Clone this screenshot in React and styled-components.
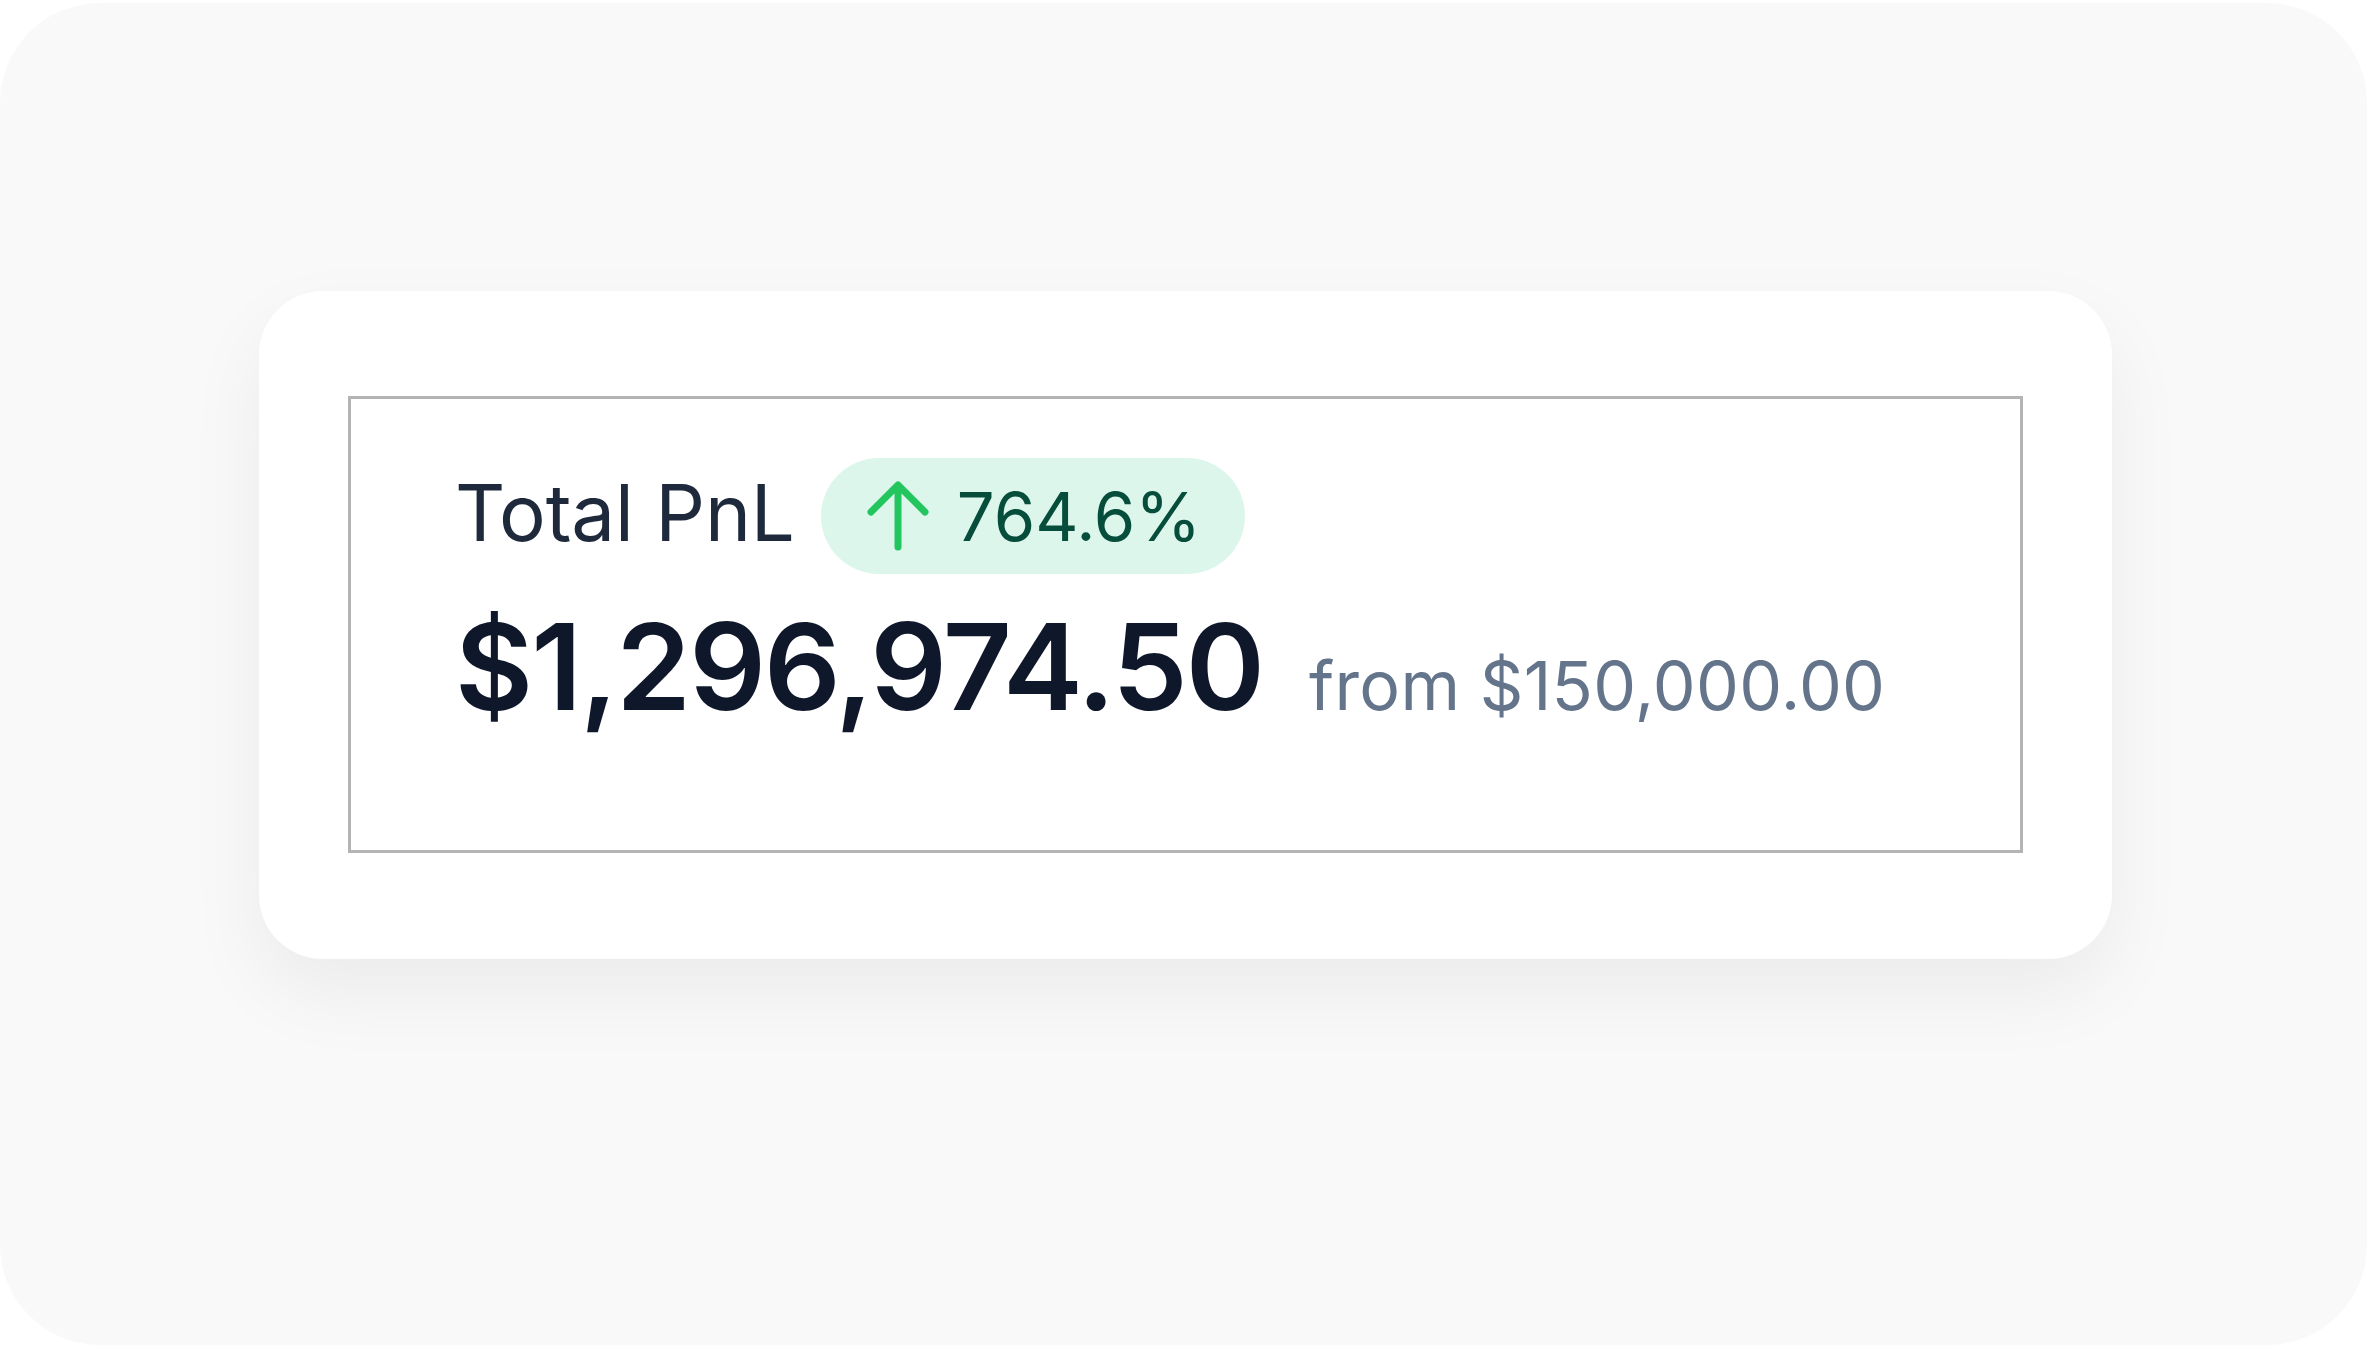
import React from "react";
//PACKAGES
import styled, { createGlobalStyle } from "styled-components";

function App() {
    return (
        <>
            <GlobalStyle />
            <Frame>
                <Card>
                    <StatBox>
                        <TitleRow>
                            <Title>Total PnL</Title>
                            <ChangeBadge>
                                <ArrowIcon viewBox="0 0 62 70" aria-hidden="true">
                                    <path d="M31 66V4M4 31L31 4L58 31" />
                                </ArrowIcon>
                                <ChangeValue>764.6%</ChangeValue>
                            </ChangeBadge>
                        </TitleRow>
                        <AmountRow>
                            <Amount>$1,296,974.50</Amount>
                            <FromText>from $150,000.00</FromText>
                        </AmountRow>
                    </StatBox>
                </Card>
            </Frame>
        </>
    );
}

export default App;

const GlobalStyle = createGlobalStyle`
    * {
        box-sizing: border-box;
    }
    html, body {
        margin: 0;
        padding: 0;
        background: #ffffff;
        font-family: Inter, "Noto Sans", sans-serif;
    }
`;

const Frame = styled.main`
    margin-top: 3px;
    width: 2367px;
    height: 1342px;
    background: #f9f9f9;
    border-radius: 100px;
    display: flex;
    flex-direction: column;
    align-items: center;
    padding-top: 288px;
    padding-left: 4px;
`;

const Card = styled.section`
    width: 1853px;
    height: 668px;
    padding: 105px 89px;
    background: #ffffff;
    border-radius: 64px;
    box-shadow: 0 34px 80px rgba(0, 0, 0, 0.06);
`;

const StatBox = styled.div`
    height: 457px;
    border: 3px solid #b4b4b4;
    padding: 59px 0 0 104px;
    display: flex;
    flex-direction: column;
`;

const TitleRow = styled.div`
    display: flex;
    align-items: center;
    gap: 26px;
`;

const Title = styled.h2`
    margin: 0 0 6px 0;
    font-size: 78px;
    line-height: 1;
    font-weight: 400;
    color: #1e293b;
    letter-spacing: -0.2px;
`;

const ChangeBadge = styled.div`
    height: 116px;
    display: flex;
    align-items: center;
    gap: 28px;
    padding: 0 44px 0 46px;
    border-radius: 999px;
    background: #dcf6ec;
`;

const ArrowIcon = styled.svg`
    width: 62px;
    height: 70px;
    fill: none;
    stroke: #22c55e;
    stroke-width: 7;
    stroke-linecap: round;
    stroke-linejoin: round;
`;

const ChangeValue = styled.span`
    font-size: 67px;
    line-height: 1;
    font-weight: 400;
    color: #064e3b;
`;

const AmountRow = styled.div`
    margin-top: 33px;
    display: flex;
    align-items: baseline;
    gap: 46px;
`;

const Amount = styled.span`
    font-size: 120px;
    line-height: 1;
    font-weight: 600;
    color: #0f172a;
    letter-spacing: -1.9px;
`;

const FromText = styled.span`
    font-size: 68px;
    line-height: 1;
    font-weight: 400;
    color: #64748b;
    letter-spacing: 0.3px;
`;
